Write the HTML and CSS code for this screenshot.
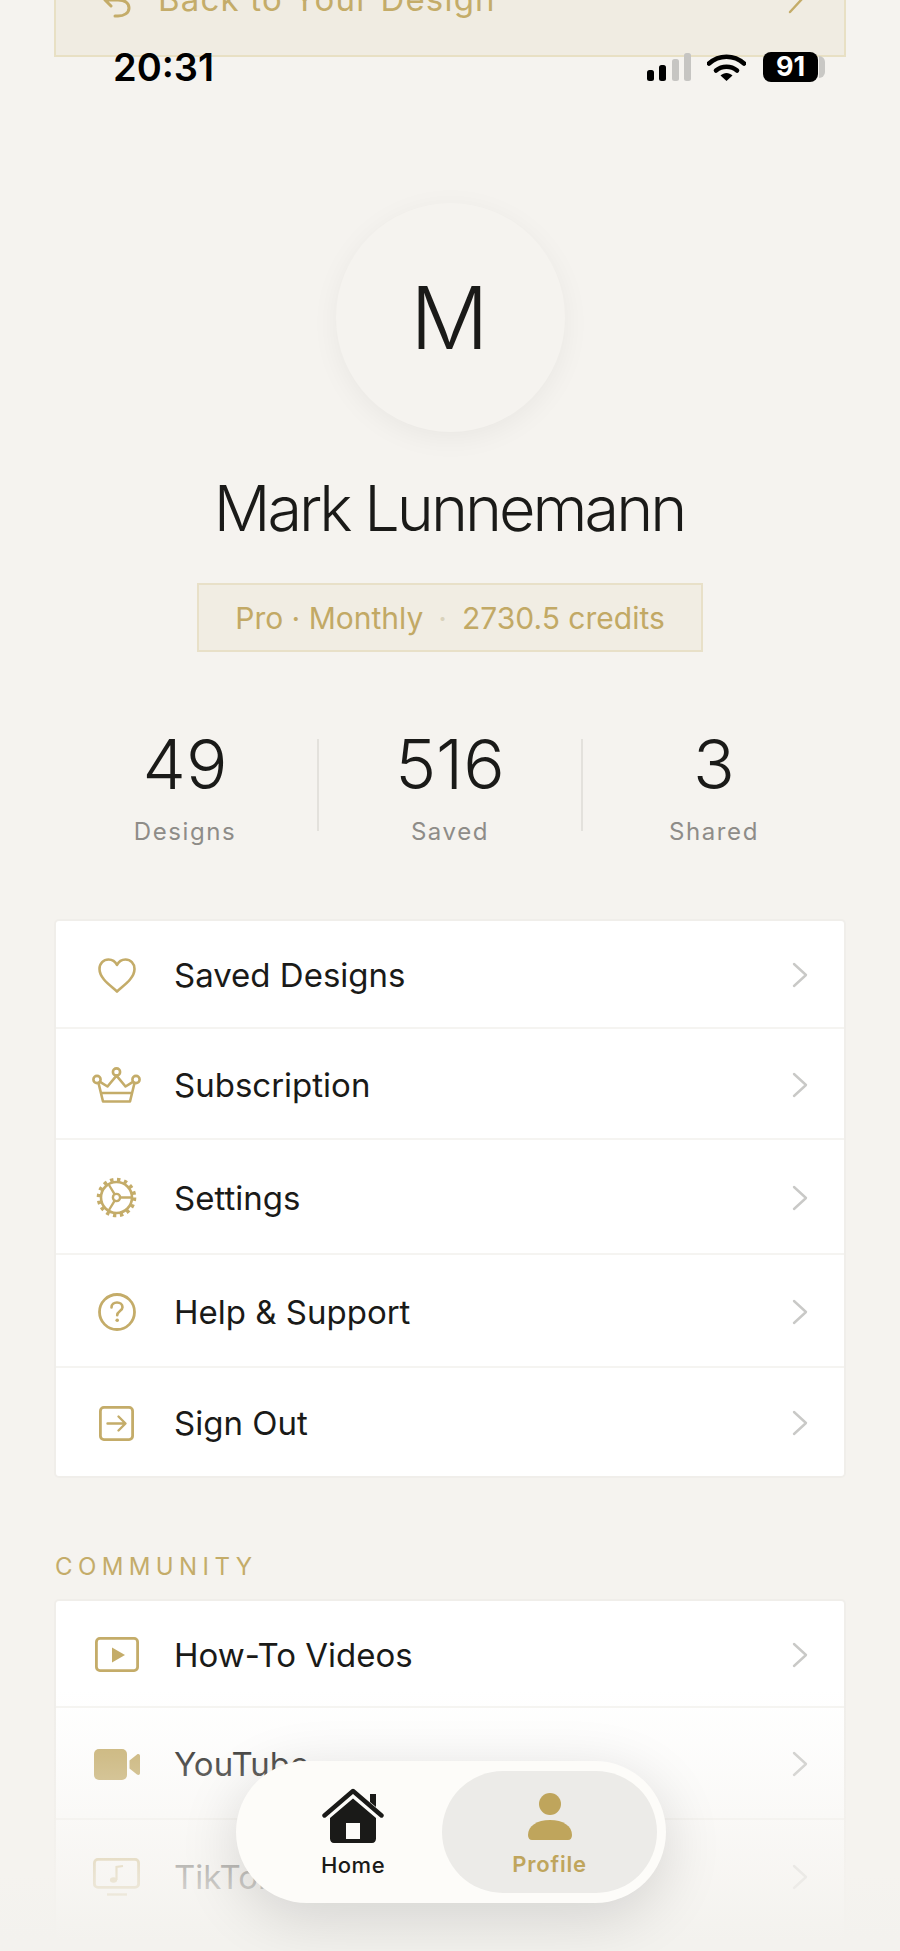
FILE: index.html
```html
<!DOCTYPE html>
<html lang="en">
<head>
    <meta charset="UTF-8">
    <meta name="viewport" content="width=device-width, initial-scale=1.0">
    <title>Profile</title>
    <link rel="stylesheet" href="styles.css">
</head>
<body>

<!-- === Status Bar === -->
<div class="status-bar">
    <span class="status-time">20:31</span>
    <div class="status-icons">
        <svg class="signal" viewBox="0 0 44 28" width="44" height="28">
            <rect x="0" y="17" width="7" height="11" rx="2.5" fill="#000"/>
            <rect x="12" y="12" width="7" height="16" rx="2.5" fill="#000"/>
            <rect x="25" y="6" width="7" height="22" rx="2.5" fill="#c6c5c2"/>
            <rect x="37" y="0" width="7" height="28" rx="2.5" fill="#c6c5c2"/>
        </svg>
        <svg class="wifi" viewBox="0 0 39 28" width="39" height="28">
            <path d="M2 10.5C12 1.5 27 1.5 37 10.5" fill="none" stroke="#000" stroke-width="4.6" stroke-linecap="round"/>
            <path d="M9 17.5C15 12.5 24 12.5 30 17.5" fill="none" stroke="#000" stroke-width="4.6" stroke-linecap="round"/>
            <path d="M13.5 22.5C17 19 22 19 25.5 22.5L19.5 28Z" fill="#000"/>
        </svg>
        <div class="battery">
            <span class="battery-level">91</span>
            <span class="battery-cap"></span>
        </div>
    </div>
</div>

<div class="page">

    <!-- === Back Banner === -->
    <div class="back-banner">
        <svg class="back-icon" viewBox="0 0 28 40" width="28" height="40">
            <path d="M9 14L2 21L8 27M3 21H15C22 21 26 24 26 29C26 34 21 37 15 37H12" fill="none" stroke="#c4ac69" stroke-width="3" stroke-linecap="round" stroke-linejoin="round"/>
        </svg>
        <span class="back-text">Back to Your Design</span>
        <svg class="back-chevron" viewBox="0 0 16 30" width="16" height="30">
            <path d="M2 2L14 15L2 28" fill="none" stroke="#c4ac69" stroke-width="2.4" stroke-linecap="round" stroke-linejoin="round"/>
        </svg>
    </div>

    <!-- === Profile Header === -->
    <div class="avatar">M</div>
    <h1 class="profile-name">Mark Lunnemann</h1>
    <div class="plan-badge">
        <span>Pro · Monthly</span>
        <span class="plan-dot">·</span>
        <span>2730.5 credits</span>
    </div>

    <!-- === Stats === -->
    <div class="stats">
        <div class="stat">
            <div class="stat-value">49</div>
            <div class="stat-label">Designs</div>
        </div>
        <div class="stat">
            <div class="stat-value">516</div>
            <div class="stat-label">Saved</div>
        </div>
        <div class="stat">
            <div class="stat-value">3</div>
            <div class="stat-label">Shared</div>
        </div>
    </div>

    <!-- === Account Menu === -->
    <div class="menu-card account-menu">
        <div class="menu-row">
            <div class="menu-icon">
                <svg viewBox="0 0 38 35" width="38" height="35">
                    <path d="M19 33.5C14 28.5 1.5 21 1.5 11C1.5 5.5 5.5 1.5 10.5 1.5C14 1.5 17.3 3.5 19 7C20.7 3.5 24 1.5 27.5 1.5C32.5 1.5 36.5 5.5 36.5 11C36.5 21 24 28.5 19 33.5Z" fill="none" stroke="#c4ac69" stroke-width="2.6" stroke-linejoin="round"/>
                </svg>
            </div>
            <span class="menu-label">Saved Designs</span>
            <svg class="chevron" viewBox="0 0 16 26" width="16" height="26"><path d="M2 2L14 13L2 24"/></svg>
        </div>
        <div class="menu-row">
            <div class="menu-icon">
                <svg viewBox="0 0 49 36" width="49" height="36">
                    <g fill="none" stroke="#c4ac69" stroke-width="2.6" stroke-linejoin="round" stroke-linecap="round">
                        <circle cx="24.5" cy="5" r="3.6"/>
                        <circle cx="5" cy="12.5" r="3.6"/>
                        <circle cx="44" cy="12.5" r="3.6"/>
                        <path d="M24.5 8.6L15.5 19.5L8 14.8M24.5 8.6L33.5 19.5L41 14.8M6.5 16L11 34.5H38L42.5 16M9 26H40"/>
                    </g>
                </svg>
            </div>
            <span class="menu-label">Subscription</span>
            <svg class="chevron" viewBox="0 0 16 26" width="16" height="26"><path d="M2 2L14 13L2 24"/></svg>
        </div>
        <div class="menu-row">
            <div class="menu-icon">
                <svg viewBox="0 0 41 41" width="41" height="41">
                    <g fill="none" stroke="#c4ac69">
                        <circle cx="20.5" cy="20.5" r="15.5" stroke-width="2.6"/>
                        <circle cx="20.5" cy="20.5" r="18" stroke-width="3.6" stroke-dasharray="3.4 3.67"/>
                        <circle cx="20.5" cy="20.5" r="3.6" stroke-width="2.4"/>
                        <path d="M24 20.5H35M18.7 23.6L13 33M18.7 17.4L13 8" stroke-width="2.4"/>
                    </g>
                </svg>
            </div>
            <span class="menu-label">Settings</span>
            <svg class="chevron" viewBox="0 0 16 26" width="16" height="26"><path d="M2 2L14 13L2 24"/></svg>
        </div>
        <div class="menu-row">
            <div class="menu-icon">
                <svg viewBox="0 0 38 38" width="38" height="38">
                    <circle cx="19" cy="19" r="17.5" fill="none" stroke="#c4ac69" stroke-width="2.8"/>
                    <path d="M13.5 14.5C13.5 11.3 16 9.5 19 9.5C22 9.5 24.5 11.3 24.5 14.2C24.5 18 19.2 18 19.2 22.2" fill="none" stroke="#c4ac69" stroke-width="2.6" stroke-linecap="round"/>
                    <circle cx="19.2" cy="27.3" r="1.8" fill="#c4ac69"/>
                </svg>
            </div>
            <span class="menu-label">Help &amp; Support</span>
            <svg class="chevron" viewBox="0 0 16 26" width="16" height="26"><path d="M2 2L14 13L2 24"/></svg>
        </div>
        <div class="menu-row">
            <div class="menu-icon">
                <svg viewBox="0 0 35 35" width="35" height="35">
                    <rect x="1.4" y="1.4" width="32.2" height="32.2" rx="3.5" fill="none" stroke="#c4ac69" stroke-width="2.8"/>
                    <path d="M8.5 17.5H26M19.5 10.5L26.5 17.5L19.5 24.5" fill="none" stroke="#c4ac69" stroke-width="2.4" stroke-linecap="round" stroke-linejoin="round"/>
                </svg>
            </div>
            <span class="menu-label">Sign Out</span>
            <svg class="chevron" viewBox="0 0 16 26" width="16" height="26"><path d="M2 2L14 13L2 24"/></svg>
        </div>
    </div>

    <!-- === Community Menu === -->
    <div class="section-title">COMMUNITY</div>
    <div class="menu-card community-menu">
        <div class="menu-row">
            <div class="menu-icon">
                <svg viewBox="0 0 44 35" width="44" height="35">
                    <rect x="1.4" y="1.4" width="41.2" height="32.2" rx="3.5" fill="none" stroke="#c4ac69" stroke-width="2.8"/>
                    <path d="M17 10.5L30 18L17 25.5Z" fill="#c4ac69"/>
                </svg>
            </div>
            <span class="menu-label">How-To Videos</span>
            <svg class="chevron" viewBox="0 0 16 26" width="16" height="26"><path d="M2 2L14 13L2 24"/></svg>
        </div>
        <div class="menu-row">
            <div class="menu-icon">
                <svg viewBox="0 0 46 31" width="46" height="31">
                    <rect x="0" y="0" width="33" height="31" rx="5" fill="#c4ac69"/>
                    <path d="M35.5 11.5L43 5.5C44.5 4.5 46 5.2 46 7V24C46 25.8 44.5 26.5 43 25.5L35.5 19.5Z" fill="#c4ac69"/>
                </svg>
            </div>
            <span class="menu-label">YouTube</span>
            <svg class="chevron" viewBox="0 0 16 26" width="16" height="26"><path d="M2 2L14 13L2 24"/></svg>
        </div>
        <div class="menu-row">
            <div class="menu-icon">
                <svg viewBox="0 0 47 38" width="47" height="38">
                    <rect x="1.4" y="1.4" width="44.2" height="28" rx="3.5" fill="none" stroke="#c4ac69" stroke-width="2.8"/>
                    <path d="M14 36.5H34" stroke="#c4ac69" stroke-width="2.4"/>
                    <path d="M23.5 22V9L30 8" fill="none" stroke="#c4ac69" stroke-width="2.2"/>
                    <ellipse cx="20.5" cy="22" rx="3.6" ry="2.8" fill="#c4ac69"/>
                </svg>
            </div>
            <span class="menu-label">TikTok</span>
            <svg class="chevron" viewBox="0 0 16 26" width="16" height="26"><path d="M2 2L14 13L2 24"/></svg>
        </div>
    </div>
</div>

<!-- === Fade Behind Tab Bar === -->
<div class="bottom-fade"></div>

<!-- === Tab Bar === -->
<nav class="tab-bar">
    <div class="tab tab-home">
        <svg viewBox="0 0 62 55" width="62" height="55">
            <path d="M2.5 27.5L31 3L59.5 27.5" fill="none" stroke="#1a1a18" stroke-width="4.4" stroke-linecap="round" stroke-linejoin="round"/>
            <path d="M48 6H54V19L48 14Z" fill="#1a1a18"/>
            <path d="M31 10.5L54 30V50.5C54 53 52.5 55 50 55H12C9.500 55 8 53 8 50.5V30ZM24 35V51H38V35Z" fill="#1a1a18" fill-rule="evenodd"/>
        </svg>
        <span class="tab-label">Home</span>
    </div>
    <div class="tab tab-active">
        <svg viewBox="0 0 44 47" width="44" height="47">
            <circle cx="22" cy="11" r="11" fill="#bfa55c"/>
            <path d="M0 42C0 33 9 27 22 27C35 27 44 33 44 42C44 45 42.500 47 40 47H4C1.500 47 0 45 0 42Z" fill="#bfa55c"/>
        </svg>
        <span class="tab-label">Profile</span>
    </div>
</nav>

</body>
</html>
```

FILE: styles.css
```css
/* === Page Styling === */
body {
    font-family: Inter, "Noto Sans", sans-serif;
    background-color: #f5f3ef;
    color: #1a1a18;
    margin: 0;
    width: 900px;
    height: 1951px;
    overflow: hidden;
    position: relative;
}

.page {
    padding: 0 54px;
}

/* === Status Bar === */
.status-bar {
    position: absolute;
    top: 46px;
    left: 113px;
    width: 712px;
    display: flex;
    justify-content: space-between;
    align-items: center;
    height: 42px;
    z-index: 5;
}

.status-time {
    font-size: 38px;
    font-weight: 600;
    color: #000;
}

.status-icons {
    display: flex;
    align-items: center;
    gap: 17px;
}

.signal {
    margin-right: -1px;
}

.battery {
    display: flex;
    align-items: center;
    gap: 1px;
}

.battery-level {
    width: 55px;
    height: 30px;
    border-radius: 8px;
    background-color: #000;
    color: #fff;
    font-size: 27px;
    font-weight: 700;
    line-height: 30px;
    text-align: center;
}

.battery-cap {
    width: 6px;
    height: 22px;
    background-color: #c9c8c5;
    border-radius: 0 6px 6px 0;
}

/* === Back Banner === */
.back-banner {
    margin-top: -60px;
    height: 117px;
    box-sizing: border-box;
    background-color: #f0ece2;
    border: 2px solid #e8e0c4;
    display: flex;
    align-items: center;
    padding: 0 40px 0 47px;
    color: #c4ac69;
}

.back-text {
    margin-left: 27px;
    font-size: 33px;
    letter-spacing: 1.2px;
    flex: 1;
}

/* === Profile Header === */
.avatar {
    width: 229px;
    height: 229px;
    border-radius: 50%;
    margin: 146px auto 0;
    background-color: #f5f3ef;
    box-shadow: 0 6px 28px rgba(0, 0, 0, 0.05);
    display: flex;
    align-items: center;
    justify-content: center;
    font-size: 87px;
    font-weight: 300;
    padding-right: 1px;
    box-sizing: border-box;
}

.profile-name {
    margin: 37px 0 0;
    padding-right: 2px;
    text-align: center;
    font-size: 63px;
    line-height: 78px;
    font-weight: 300;
    letter-spacing: -3px;
}

.plan-badge {
    width: 506px;
    height: 69px;
    box-sizing: border-box;
    margin: 36px auto 0;
    background-color: #f1ede3;
    border: 2px solid #e8e0c8;
    color: #c2a965;
    font-size: 30px;
    display: flex;
    align-items: center;
    justify-content: center;
    gap: 15px;
}

.plan-dot {
    color: #d9d2bb;
}

/* === Stats === */
.stats {
    display: grid;
    grid-template-columns: repeat(3, 1fr);
    margin: 87px 1px 0 -1px;
}

.stat {
    height: 92px;
    text-align: center;
    border-left: 2px solid #e3e1dc;
}

.stat:first-child {
    border-left: none;
}

.stat-value {
    font-size: 69px;
    font-weight: 300;
    line-height: 52px;
    margin-top: -1px;
}

.stat-label {
    font-size: 24px;
    line-height: 30px;
    letter-spacing: 1.6px;
    color: #8e8c88;
    margin-top: 27px;
}

/* === Menu Cards === */
.menu-card {
    display: grid;
    background-color: #fff;
    border: 2px solid #f0eeea;
    border-radius: 5px;
    box-sizing: border-box;
}

.account-menu {
    margin-top: 88px;
    height: 559px;
    grid-template-rows: 108px 111px 115px 113px 108px;
}

.community-menu {
    margin-top: 17px;
    grid-template-rows: 107px 112px 111px 60px;
}

.menu-row {
    display: flex;
    align-items: center;
    border-bottom: 2px solid #f5f4f1;
    padding: 2px 36px 0 0;
}

.menu-row:last-child {
    border-bottom: none;
}

.menu-icon {
    width: 118px;
    padding-left: 3px;
    box-sizing: border-box;
    display: flex;
    justify-content: center;
    align-items: center;
}

.menu-label {
    flex: 1;
    font-size: 33px;
}

.chevron {
    fill: none;
    stroke: #c9c9c7;
    stroke-width: 2.4;
    stroke-linecap: round;
    stroke-linejoin: round;
}

/* === Section Title === */
.section-title {
    margin-top: 74px;
    padding-left: 1px;
    font-size: 24px;
    line-height: 30px;
    letter-spacing: 5.4px;
    color: #c4ac69;
}

/* === Bottom Fade === */
.bottom-fade {
    position: absolute;
    left: 0;
    right: 0;
    top: 1690px;
    bottom: 0;
    background: linear-gradient(to bottom, rgba(245, 243, 239, 0) 0, rgba(245, 243, 239, 0.25) 70px, rgba(245, 243, 239, 0.78) 185px, rgba(243, 242, 238, 1) 250px);
}

/* === Tab Bar === */
.tab-bar {
    position: absolute;
    left: 236px;
    top: 1761px;
    width: 430px;
    height: 142px;
    box-sizing: border-box;
    padding: 10px 0;
    border-radius: 71px;
    background-color: #fdfcf9;
    box-shadow: 0 14px 60px rgba(0, 0, 0, 0.14);
    display: grid;
    grid-template-columns: 206px 215px;
}

.tab {
    display: flex;
    flex-direction: column;
    align-items: center;
    padding-top: 17px;
    box-sizing: border-box;
}

.tab-home {
    padding-left: 28px;
}

.tab-active {
    background-color: #ecebe8;
    border-radius: 61px;
    color: #bfa55c;
    padding-top: 22px;
}

.tab-label {
    font-size: 22px;
    font-weight: 500;
    line-height: 28px;
    margin-top: 8px;
    letter-spacing: 0.5px;
}

.tab-active .tab-label {
    font-weight: 600;
    margin-top: 10px;
    letter-spacing: 0.8px;
}
```
